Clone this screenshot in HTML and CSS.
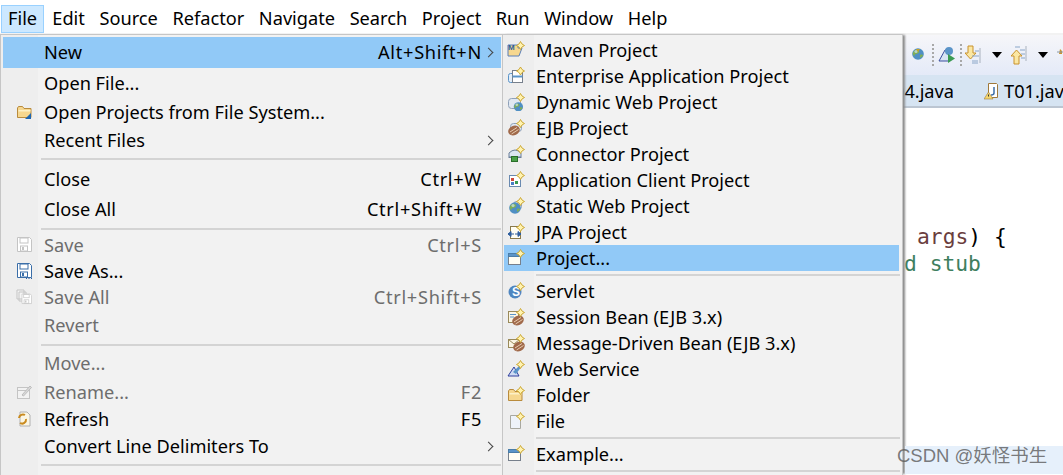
FILE: index.html
```html
<!DOCTYPE html>
<html lang="en">
<head>
<meta charset="utf-8">
<title>Eclipse File menu</title>
<link rel="stylesheet" href="styles.css">
</head>
<body>
<svg class="defs" width="0" height="0" aria-hidden="true">
  <defs>
    <g id="spark"><path d="M13.5 0.5 15 3 17.5 4.5 15 6 13.5 8.5 12 6 9.5 4.5 12 3Z" fill="#fff3b0" stroke="#c9a227" stroke-width=".9"/></g>
    <g id="bean"><ellipse cx="7" cy="11.5" rx="6" ry="4.6" fill="#a0694a" transform="rotate(-25 7 11.5)"/><path d="M3 13 10 8.5M4.5 15 11.5 10.5" stroke="#e8cdb0" stroke-width="1"/></g>
    <g id="globe"><circle cx="8" cy="11" r="5.8" fill="#4f8fc4"/><path d="M4 8c2-2 4-1 5 0s-1 3-3 3-1 3-2 2-2-3 0-5ZM10 12c2-1 3 0 3 1l-3 2Z" fill="#7fae56"/><circle cx="6" cy="8.5" r="1.6" fill="#cfe6f7" opacity=".7"/></g>
    <g id="win"><rect x="1.5" y="4.5" width="12" height="11" fill="#fffef4" stroke="#77808c"/><rect x="1.5" y="4.5" width="12" height="3" fill="#5a94c8" stroke="#4a7da8"/></g>
    <g id="save"><path d="M1.5 1.5h12l2 2v12h-14Z" fill="#fff" stroke="currentColor"/><rect x="4" y="2" width="8" height="5" fill="none" stroke="currentColor"/><rect x="4.5" y="10" width="7" height="5" fill="none" stroke="currentColor"/><rect x="6" y="11" width="2" height="3" fill="currentColor"/></g>
    <g id="folder"><path d="M1.5 14.5V5l1-1.500h4l1.500 2h7v9Z" fill="#f6d78f" stroke="#b98b3c"/><path d="M2.500 7h12v1.500h-12Z" fill="#fdf0c6"/></g>
  </defs>
</svg>
<div class="app">
  <nav class="menubar">
    <span class="top top-file">File</span>
    <span class="top top-edit">Edit</span>
    <span class="top">Source</span>
    <span class="top">Refactor</span>
    <span class="top">Navigate</span>
    <span class="top">Search</span>
    <span class="top">Project</span>
    <span class="top">Run</span>
    <span class="top">Window</span>
    <span class="top">Help</span>
  </nav>
  <div class="toolbar">
    <svg class="tb tb-globe" width="16" height="18" viewBox="0 0 16 18"><use href="#globe" y="-2"/><path d="M6 4l2 3 2-3" fill="#c9a227"/></svg>
    <span class="grip grip-a"></span>
    <svg class="tb" width="18" height="18" viewBox="0 0 18 18"><path d="M1 15 7 4h2l3 11Z" fill="#d8e4f4" stroke="#3b4f9e"/><circle cx="11" cy="5" r="4" fill="#5a94c8"/><path d="M10 8v9l7-4.500Z" fill="#3a9a52"/></svg>
    <span class="grip grip-b"></span>
    <svg class="tb" width="16" height="20" viewBox="0 0 16 20"><path d="M3 1h5v7h3l-5.500 6L0 8h3Z" fill="#fbe7a2" stroke="#c9922c"/><path d="M7 16h6M7 11h7M10 6h4M7 18h6" stroke="#8aa6c8"/><path d="M15 3v15" stroke="#a9b2bd"/></svg>
    <span class="drop"></span>
    <svg class="tb" width="16" height="20" viewBox="0 0 16 20"><path d="M5.500 5 11 11H8v8H3v-8H0Z" fill="#fbe7a2" stroke="#c9922c"/><path d="M4 2h5M9 5h5M10 9h4M10 13h4" stroke="#8aa6c8"/><path d="M15 1v15" stroke="#a9b2bd"/></svg>
    <span class="drop"></span>
    <svg class="tb" width="6" height="14" viewBox="0 0 6 14"><path d="M3 1l2 2v3H2Z" fill="#c9922c"/><path d="M0 4h6" stroke="#8a9aa8"/></svg>
  </div>
  <div class="tabs">
    <span class="tab tab-clip">04.java</span>
    <svg class="tab-ico" width="16" height="18" viewBox="0 0 16 18"><path d="M4.500 1.500h8l1 1v13h-9Z" fill="#fff" stroke="#a0793a"/><path d="M10 5v6q0 2-3 2" fill="none" stroke="#3b6ea8" stroke-width="1.500"/><path d="M4.500 10 9 17H0Z" fill="#f5d76e" stroke="#a0793a" stroke-width=".6"/><path d="M4.500 12.500v2" stroke="#333"/></svg>
    <span class="tab">T01.java</span>
  </div>
  <main class="editor">
    <div class="code"><span class="var">args</span>) {</div>
    <div class="code code-b">d stub</div>
  </main>
</div>

<div class="menu menu-file">
  <div class="item active h31"><span class="ico"></span><span class="lbl">New</span><span class="key">Alt+Shift+N</span><span class="arr"></span></div>
  <div class="item h31"><span class="ico"></span><span class="lbl">Open File...</span></div>
  <div class="item h28"><span class="ico"><svg width="16" height="18" viewBox="0 0 16 18"><use href="#folder"/><path d="M15 10v6H9Z" fill="#1f66b0"/></svg></span><span class="lbl">Open Projects from File System...</span></div>
  <div class="item h27"><span class="ico"></span><span class="lbl">Recent Files</span><span class="key"></span><span class="arr"></span></div>
  <div class="sep sep-10"></div>
  <div class="item h31"><span class="ico"></span><span class="lbl">Close</span><span class="key">Ctrl+W</span></div>
  <div class="item h29"><span class="ico"></span><span class="lbl">Close All</span><span class="key">Ctrl+Shift+W</span></div>
  <div class="sep sep-9"></div>
  <div class="item h26 off"><span class="ico"><svg class="dim" width="16" height="18" viewBox="0 0 16 18"><use href="#save"/></svg></span><span class="lbl">Save</span><span class="key">Ctrl+S</span></div>
  <div class="item h26"><span class="ico"><svg class="blue" width="16" height="18" viewBox="0 0 16 18"><use href="#save"/><path d="M10 16.500h1M12.500 16.500h1M15 16.500h1" stroke="#2f5f9e"/></svg></span><span class="lbl">Save As...</span></div>
  <div class="item h26 off"><span class="ico"><svg class="dim" width="16" height="18" viewBox="0 0 16 18"><path d="M1 2h7v9H1ZM3 4h7v9H3Z" fill="#f4f4f4" stroke="#c4c4c4"/><use href="#save" transform="translate(5 5) scale(.68)"/></svg></span><span class="lbl">Save All</span><span class="key">Ctrl+Shift+S</span></div>
  <div class="item h29 off"><span class="ico"></span><span class="lbl">Revert</span></div>
  <div class="sep sep-9"></div>
  <div class="item h30 off"><span class="ico"></span><span class="lbl">Move...</span></div>
  <div class="item h27 off"><span class="ico"><svg width="16" height="18" viewBox="0 0 16 18"><rect x="1.500" y="4.500" width="12" height="11" fill="#f2f2f2" stroke="#c4c4c4"/><path d="M1.500 7.500h12" stroke="#c4c4c4"/><path d="M6 12 14 3l1.500 1.500-8 8.500Z" fill="#d8d8d8" stroke="#bdbdbd"/></svg></span><span class="lbl">Rename...</span><span class="key">F2</span></div>
  <div class="item h27"><span class="ico"><svg width="16" height="18" viewBox="0 0 16 18"><path d="M4 2h7l3 3v11H4Z" fill="#fbf6e4" stroke="#b0b0b0"/><path d="M3 8a4 4 0 0 1 6-3M10 9a4 4 0 0 1-6 4" fill="none" stroke="#c98a1e" stroke-width="2"/></svg></span><span class="lbl">Refresh</span><span class="key">F5</span></div>
  <div class="item h27"><span class="ico"></span><span class="lbl">Convert Line Delimiters To</span><span class="key"></span><span class="arr"></span></div>
  <div class="sep sep-10"></div>
</div>

<div class="menu menu-new">
  <div class="item h26"><span class="ico"><svg width="18" height="18" viewBox="0 0 18 18"><path d="M1 15V4h10v3h4l-3 8Z" fill="#f6d78f" stroke="#5a7fb8"/><text class="ico-m" x="1" y="9">M</text><use href="#spark"/></svg></span><span class="lbl">Maven Project</span></div>
  <div class="item h26"><span class="ico"><svg width="18" height="18" viewBox="0 0 18 18"><rect x="1.500" y="6.500" width="9" height="9" rx="2" fill="#e4eef8" stroke="#5a94c8"/><rect x="5.500" y="3.500" width="10" height="12" fill="#fff" stroke="#77808c"/><path d="M5.500 8.500h10v2h-10Z" fill="#5a94c8"/><use href="#spark" y="-.5"/></svg></span><span class="lbl">Enterprise Application Project</span></div>
  <div class="item h26"><span class="ico"><svg width="18" height="18" viewBox="0 0 18 18"><rect x="1.500" y="5.500" width="12" height="10" rx="3" fill="#e0e8f2" stroke="#8ea0b8"/><use href="#globe" transform="translate(5 5) scale(.8)"/><use href="#spark"/></svg></span><span class="lbl">Dynamic Web Project</span></div>
  <div class="item h26"><span class="ico"><svg width="18" height="18" viewBox="0 0 18 18"><rect x="3.500" y="4.500" width="11" height="8" rx="3" fill="#e0e8f2" stroke="#8ea0b8"/><use href="#bean"/><use href="#spark"/></svg></span><span class="lbl">EJB Project</span></div>
  <div class="item h26"><span class="ico"><svg width="18" height="18" viewBox="0 0 18 18"><path d="M2 8q6-6 12 0v4H2Z" fill="#dbe6f2" stroke="#6a7f9a"/><path d="M1.500 12.500h13" stroke="#6a7f9a"/><rect x="4.500" y="11.500" width="6" height="5" fill="#4aa04a" stroke="#2a6f2a"/><use href="#spark"/></svg></span><span class="lbl">Connector Project</span></div>
  <div class="item h26"><span class="ico"><svg width="18" height="18" viewBox="0 0 18 18"><rect x="2.500" y="4.500" width="11" height="11" fill="#fff" stroke="#6a8ab0"/><rect x="4" y="7" width="3" height="3" fill="#d04a3a"/><rect x="8" y="10" width="3" height="3" fill="#3a9a52"/><rect x="4" y="11" width="3" height="3" fill="#4a7dc4"/><use href="#spark"/></svg></span><span class="lbl">Application Client Project</span></div>
  <div class="item h26"><span class="ico"><svg width="18" height="18" viewBox="0 0 18 18"><rect x="6.500" y="4.500" width="8" height="8" rx="3" fill="#e0e8f2" stroke="#8ea0b8"/><use href="#globe"/><use href="#spark"/></svg></span><span class="lbl">Static Web Project</span></div>
  <div class="item h26"><span class="ico"><svg width="18" height="18" viewBox="0 0 18 18"><rect x="3.500" y="3.500" width="10" height="12" fill="#fffef4" stroke="#8a7a4a"/><path d="M1 11h6M4 8.500 1 11l3 2.500ZM14 11H8M11 8.500l3 2.500-3 2.500Z" fill="#2f5f9e" stroke="#2f5f9e"/><use href="#spark"/></svg></span><span class="lbl">JPA Project</span></div>
  <div class="item h26 active"><span class="ico"><svg width="18" height="18" viewBox="0 0 18 18"><use href="#win"/><use href="#spark"/></svg></span><span class="lbl">Project...</span></div>
  <div class="sep sep-7"></div>
  <div class="item h26"><span class="ico"><svg width="18" height="18" viewBox="0 0 18 18"><circle cx="8" cy="10" r="6.500" fill="#4f86c0"/><text class="ico-s" x="5" y="14">S</text><use href="#spark"/></svg></span><span class="lbl">Servlet</span></div>
  <div class="item h26"><span class="ico"><svg width="18" height="18" viewBox="0 0 18 18"><rect x="1.500" y="3.500" width="10" height="11" fill="#fbf6e4" stroke="#9a8a5a"/><path d="M3 6.500h6M3 9h4" stroke="#5a94c8"/><use href="#bean" transform="translate(4 1)"/><use href="#spark"/></svg></span><span class="lbl">Session Bean (EJB 3.x)</span></div>
  <div class="item h26"><span class="ico"><svg width="18" height="18" viewBox="0 0 18 18"><rect x="1.500" y="5.500" width="11" height="8" fill="#fbf6e4" stroke="#9a8a5a"/><path d="M1.500 5.500 7 10l5.500-4.500" fill="none" stroke="#9a8a5a"/><use href="#bean" transform="translate(5 1)"/><use href="#spark"/></svg></span><span class="lbl">Message-Driven Bean (EJB 3.x)</span></div>
  <div class="item h26"><span class="ico"><svg width="18" height="18" viewBox="0 0 18 18"><path d="M1 16 7 7l5 9Z" fill="#cfdcf4" stroke="#2f3f9e"/><path d="M6 12 13 5l2 1-6 8Z" fill="#5a94c8"/><use href="#spark"/></svg></span><span class="lbl">Web Service</span></div>
  <div class="item h26"><span class="ico"><svg width="18" height="18" viewBox="0 0 18 18"><use href="#folder"/><use href="#spark"/></svg></span><span class="lbl">Folder</span></div>
  <div class="item h26"><span class="ico"><svg width="18" height="18" viewBox="0 0 18 18"><path d="M3.500 3.500h8l2 2v11h-10Z" fill="#eef3fa" stroke="#a8a8a0"/><use href="#spark"/></svg></span><span class="lbl">File</span></div>
  <div class="sep sep-7"></div>
  <div class="item h26"><span class="ico"><svg width="18" height="18" viewBox="0 0 18 18"><use href="#win"/><use href="#spark"/></svg></span><span class="lbl">Example...</span></div>
  <div class="sep sep-7"></div>
</div>

<div class="band"></div>
<div class="mark">CSDN @妖怪书生</div>
</body>
</html>
```
FILE: styles.css
```css
* { box-sizing: border-box; }
html, body { margin: 0; padding: 0; }
body {
  width: 1063px;
  height: 475px;
  overflow: hidden;
  position: relative;
  background: #fff;
  font-family: "Noto Sans", "Open Sans", sans-serif;
  font-size: 18.2px;
  color: #000;
}
.defs { position: absolute; }
.app { display: flex; flex-direction: column; height: 475px; }

.menubar { display: flex; height: 33px; background: #fff; padding: 5px 0 0 1px; }
.top { height: 28px; line-height: 27px; padding: 0 7.3px; white-space: nowrap; }
.top-file { width: 43px; background: #cce8ff; border: 1px solid #99d1ff; line-height: 25px; padding: 0 6px; }
.top-edit { margin-left: 1px; }

.toolbar {
  height: 42px;
  display: flex;
  align-items: center;
  padding-left: 910px;
  background: linear-gradient(#f6f6f9, #e4eaf8);
  border-top: 2px solid #f2f2f2;
  white-space: nowrap;
}
.tb { flex: none; }
.grip { width: 2px; height: 22px; background: repeating-linear-gradient(#a8a8a8 0 2px, transparent 2px 4px); flex: none; }
.grip-a { margin: 0 4px 0 6px; }
.grip-b { margin: 0 3px 0 4px; }
.tb-globe { margin-top: -3px; }
.drop { width: 0; height: 0; border: 5px solid transparent; border-top: 6px solid #000; border-bottom: 0; margin: -1px 9px 0 11px; flex: none; }

.tabs {
  height: 33px;
  display: flex;
  align-items: center;
  padding-left: 894px;
  background: #d6e4f2;
  border-bottom: 2px solid #bcc6d2;
  white-space: nowrap;
  overflow: hidden;
}
.tab-clip { margin-right: 30px; }
.tab-ico { margin-right: 4px; flex: none; }

.editor { flex: 1; background: #fff; padding: 115px 0 0 917px; }
.code { font-family: "DejaVu Sans Mono", monospace; font-size: 21.3px; line-height: 27px; white-space: pre; color: #000; }
.var { color: #6a3e3e; }
.code-b { color: #3f7f5f; margin-left: -13px; }

.menu {
  position: absolute;
  top: 34px;
  background: linear-gradient(90deg, #eeeeee 0 37px, #f2f2f2 37px);
  border: 1px solid #c6c6c6;
  border-bottom: 0;
  height: 441px;
  overflow: hidden;
}
.menu-file { left: 0; width: 503px; padding: 2px 1px 0 2px; }
.menu-new { left: 502px; width: 401px; padding: 2px 2px 0 1px; background: linear-gradient(90deg, #eeeeee 0 31px, #f2f2f2 31px); box-shadow: 3px 0 2px -1px #8c8c8c; }

.item { display: flex; align-items: center; white-space: nowrap; position: relative; padding-bottom: 2px; }
.menu-new .item { padding-bottom: 0; }
.h26 { height: 26px; } .h27 { height: 27px; } .h28 { height: 28px; } .h29 { height: 29px; } .h30 { height: 30px; } .h31 { height: 31px; }
.active { background: #91c9f7; }
.off { color: #6d6d6d; }
.ico { width: 41px; height: 100%; flex: none; display: flex; align-items: center; padding-left: 13px; }
.lbl { flex: 1; }
.key { margin-right: 19px; letter-spacing: .7px; }
.arr { position: absolute; right: 9px; top: 50%; width: 7px; height: 7px; margin-top: -4px; border-top: 1.5px solid #444; border-right: 1.5px solid #444; transform: rotate(45deg); }

.menu-new .ico { width: 32px; padding-left: 3px; }
.menu-new .active { margin-right: 1px; }

.sep { background: linear-gradient(#d4d4d4, #d4d4d4) no-repeat 38px center / 100% 2px; }
.menu-new .sep { background-position: 32px center; }
.sep-7 { height: 7px; } .sep-9 { height: 9px; } .sep-10 { height: 10px; }

.dim { color: #c4c4c4; }
.blue { color: #3a6ea8; }
.ico-m { font: 700 8px "Liberation Sans", sans-serif; fill: #2f5f9e; }
.ico-s { font: 700 12px "Liberation Sans", sans-serif; fill: #fff; }

.band { position: absolute; left: 905px; top: 446px; width: 158px; height: 28px; background: #e6f0fb; }
.mark {
  position: absolute;
  left: 897px;
  top: 443px;
  font-family: "Liberation Sans", "Noto Sans CJK SC", sans-serif;
  font-size: 18.5px;
  line-height: 26px;
  color: rgba(90, 90, 90, .8);
  white-space: nowrap;
}
```
